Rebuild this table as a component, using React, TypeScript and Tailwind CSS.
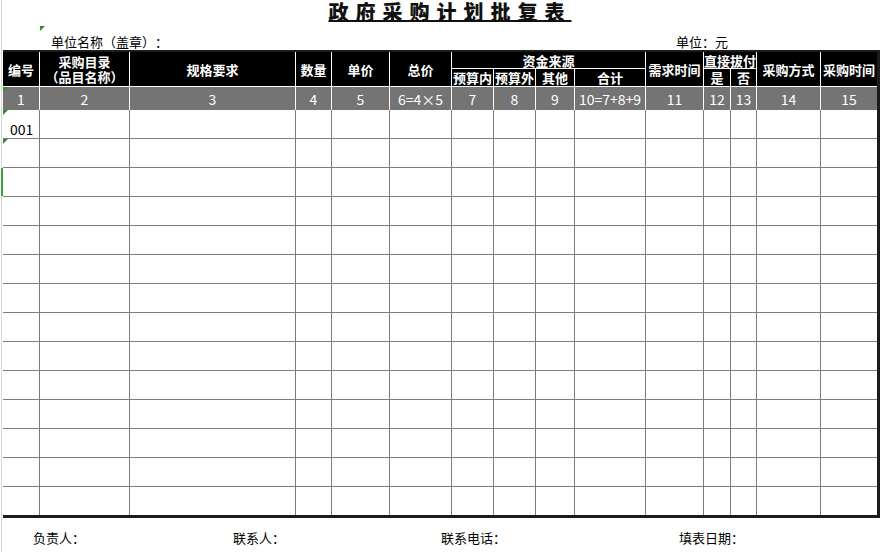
import React from 'react';

const FONT = { fontFamily: '"Noto Sans CJK SC", "Noto Sans", sans-serif' };

const GRID =
  'grid grid-cols-[37px_90px_166px_36px_58px_62px_42px_42px_39px_71px_58px_27px_26px_64px_56px]';

const numbers = ['1', '2', '3', '4', '5', '6=4×5', '7', '8', '9', '10=7+8+9', '11', '12', '13', '14', '15'];

function Marker() {
  return (
    <span className="absolute left-0 top-0 h-0 w-0 border-r-[5px] border-t-[5px] border-r-transparent border-t-[#2e8b2e]" />
  );
}

function HeadCell({
  children,
  className = '',
}: {
  children: React.ReactNode;
  className?: string;
}) {
  return (
    <div
      className={`flex items-center justify-center border-b border-r border-white text-center text-[13px] font-bold leading-[15px] text-white ${className}`}
    >
      {children}
    </div>
  );
}

export default function App() {
  const rows = Array.from({ length: 14 }, (_, i) => i);

  return (
    <div
      className="h-[552px] w-[890px] overflow-hidden bg-white text-black [text-spacing-trim:space-all]"
      style={FONT}
    >
      <div className="ml-px h-full border-l border-[#d6d6d6] pl-px">
        {/* title */}
        <div className="flex h-[26px] items-start justify-center pt-px">
          <h1 className="pl-[7px] text-[20px] font-black leading-[21px] tracking-[7px] text-[#111] underline decoration-[2px] underline-offset-[0px]">
            政府采购计划批复表
          </h1>
        </div>

        {/* unit line */}
        <div className="relative flex h-[24px] items-end pb-px text-[13px] leading-[14px]">
          <span className="absolute left-[37px] top-0 h-0 w-0 border-r-[5px] border-t-[5px] border-r-transparent border-t-[#2e8b2e]" />
          <span className="ml-[48px] w-[625px]">单位名称（盖章）：</span>
          <span>单位：元</span>
        </div>

        {/* table */}
        <div className="w-[877px] border-b-[3px] border-r-[3px] border-t-[2px] border-[#1c1c1c]">
          <div className={`${GRID} grid-rows-[17px_18px] bg-black`}>
            <HeadCell className="row-span-2">编号</HeadCell>
            <HeadCell className="row-span-2 flex-col text-[12px] leading-[15px]">
              <span>采购目录</span>
              <span>（品目名称）</span>
            </HeadCell>
            <HeadCell className="row-span-2">规格要求</HeadCell>
            <HeadCell className="row-span-2">数量</HeadCell>
            <HeadCell className="row-span-2">单价</HeadCell>
            <HeadCell className="row-span-2">总价</HeadCell>
            <HeadCell className="col-span-4">资金来源</HeadCell>
            <HeadCell className="row-span-2">需求时间</HeadCell>
            <HeadCell className="col-span-2">直接拔付</HeadCell>
            <HeadCell className="row-span-2">采购方式</HeadCell>
            <HeadCell className="row-span-2 border-r-0">采购时间</HeadCell>
            <HeadCell>预算内</HeadCell>
            <HeadCell>预算外</HeadCell>
            <HeadCell>其他</HeadCell>
            <HeadCell>合计</HeadCell>
            <HeadCell>是</HeadCell>
            <HeadCell>否</HeadCell>
          </div>

          <div className={`${GRID} h-[23px] bg-[#747474]`}>
            {numbers.map((n, i) => (
              <div
                key={n}
                className={`relative flex items-center justify-center text-[14px] leading-none text-white ${
                  i < numbers.length - 1 ? 'border-r border-white' : ''
                }`}
              >
                {i === 0 && <Marker />}
                {n}
              </div>
            ))}
          </div>

          {rows.map((r) => (
            <div
              key={r}
              className={`${GRID} ${r < rows.length - 1 ? 'h-[29px] border-b border-[#7c7c7c]' : 'h-[28px]'}`}
            >
              {numbers.map((n, i) => (
                <div
                  key={n}
                  className={`relative flex items-center text-[14px] leading-none ${
                    i < numbers.length - 1 ? 'border-r border-[#7c7c7c]' : ''
                  }`}
                >
                  {i === 0 && r < 2 && <Marker />}
                  {i === 0 && r === 2 && (
                    <span className="absolute -left-[2px] top-0 h-full w-[2px] bg-[#3fa03f]" />
                  )}
                  {i === 0 && r === 0 && <span className="pl-[7px] pt-[9px]">001</span>}
                </div>
              ))}
            </div>
          ))}
        </div>

        {/* footer */}
        <div className="flex h-[34px] items-center pl-[30px] pt-[5px] text-[13px] leading-[14px]">
          <span className="w-[200px]">负责人：</span>
          <span className="w-[208px]">联系人：</span>
          <span className="w-[238px]">联系电话：</span>
          <span>填表日期：</span>
        </div>
      </div>
    </div>
  );
}
